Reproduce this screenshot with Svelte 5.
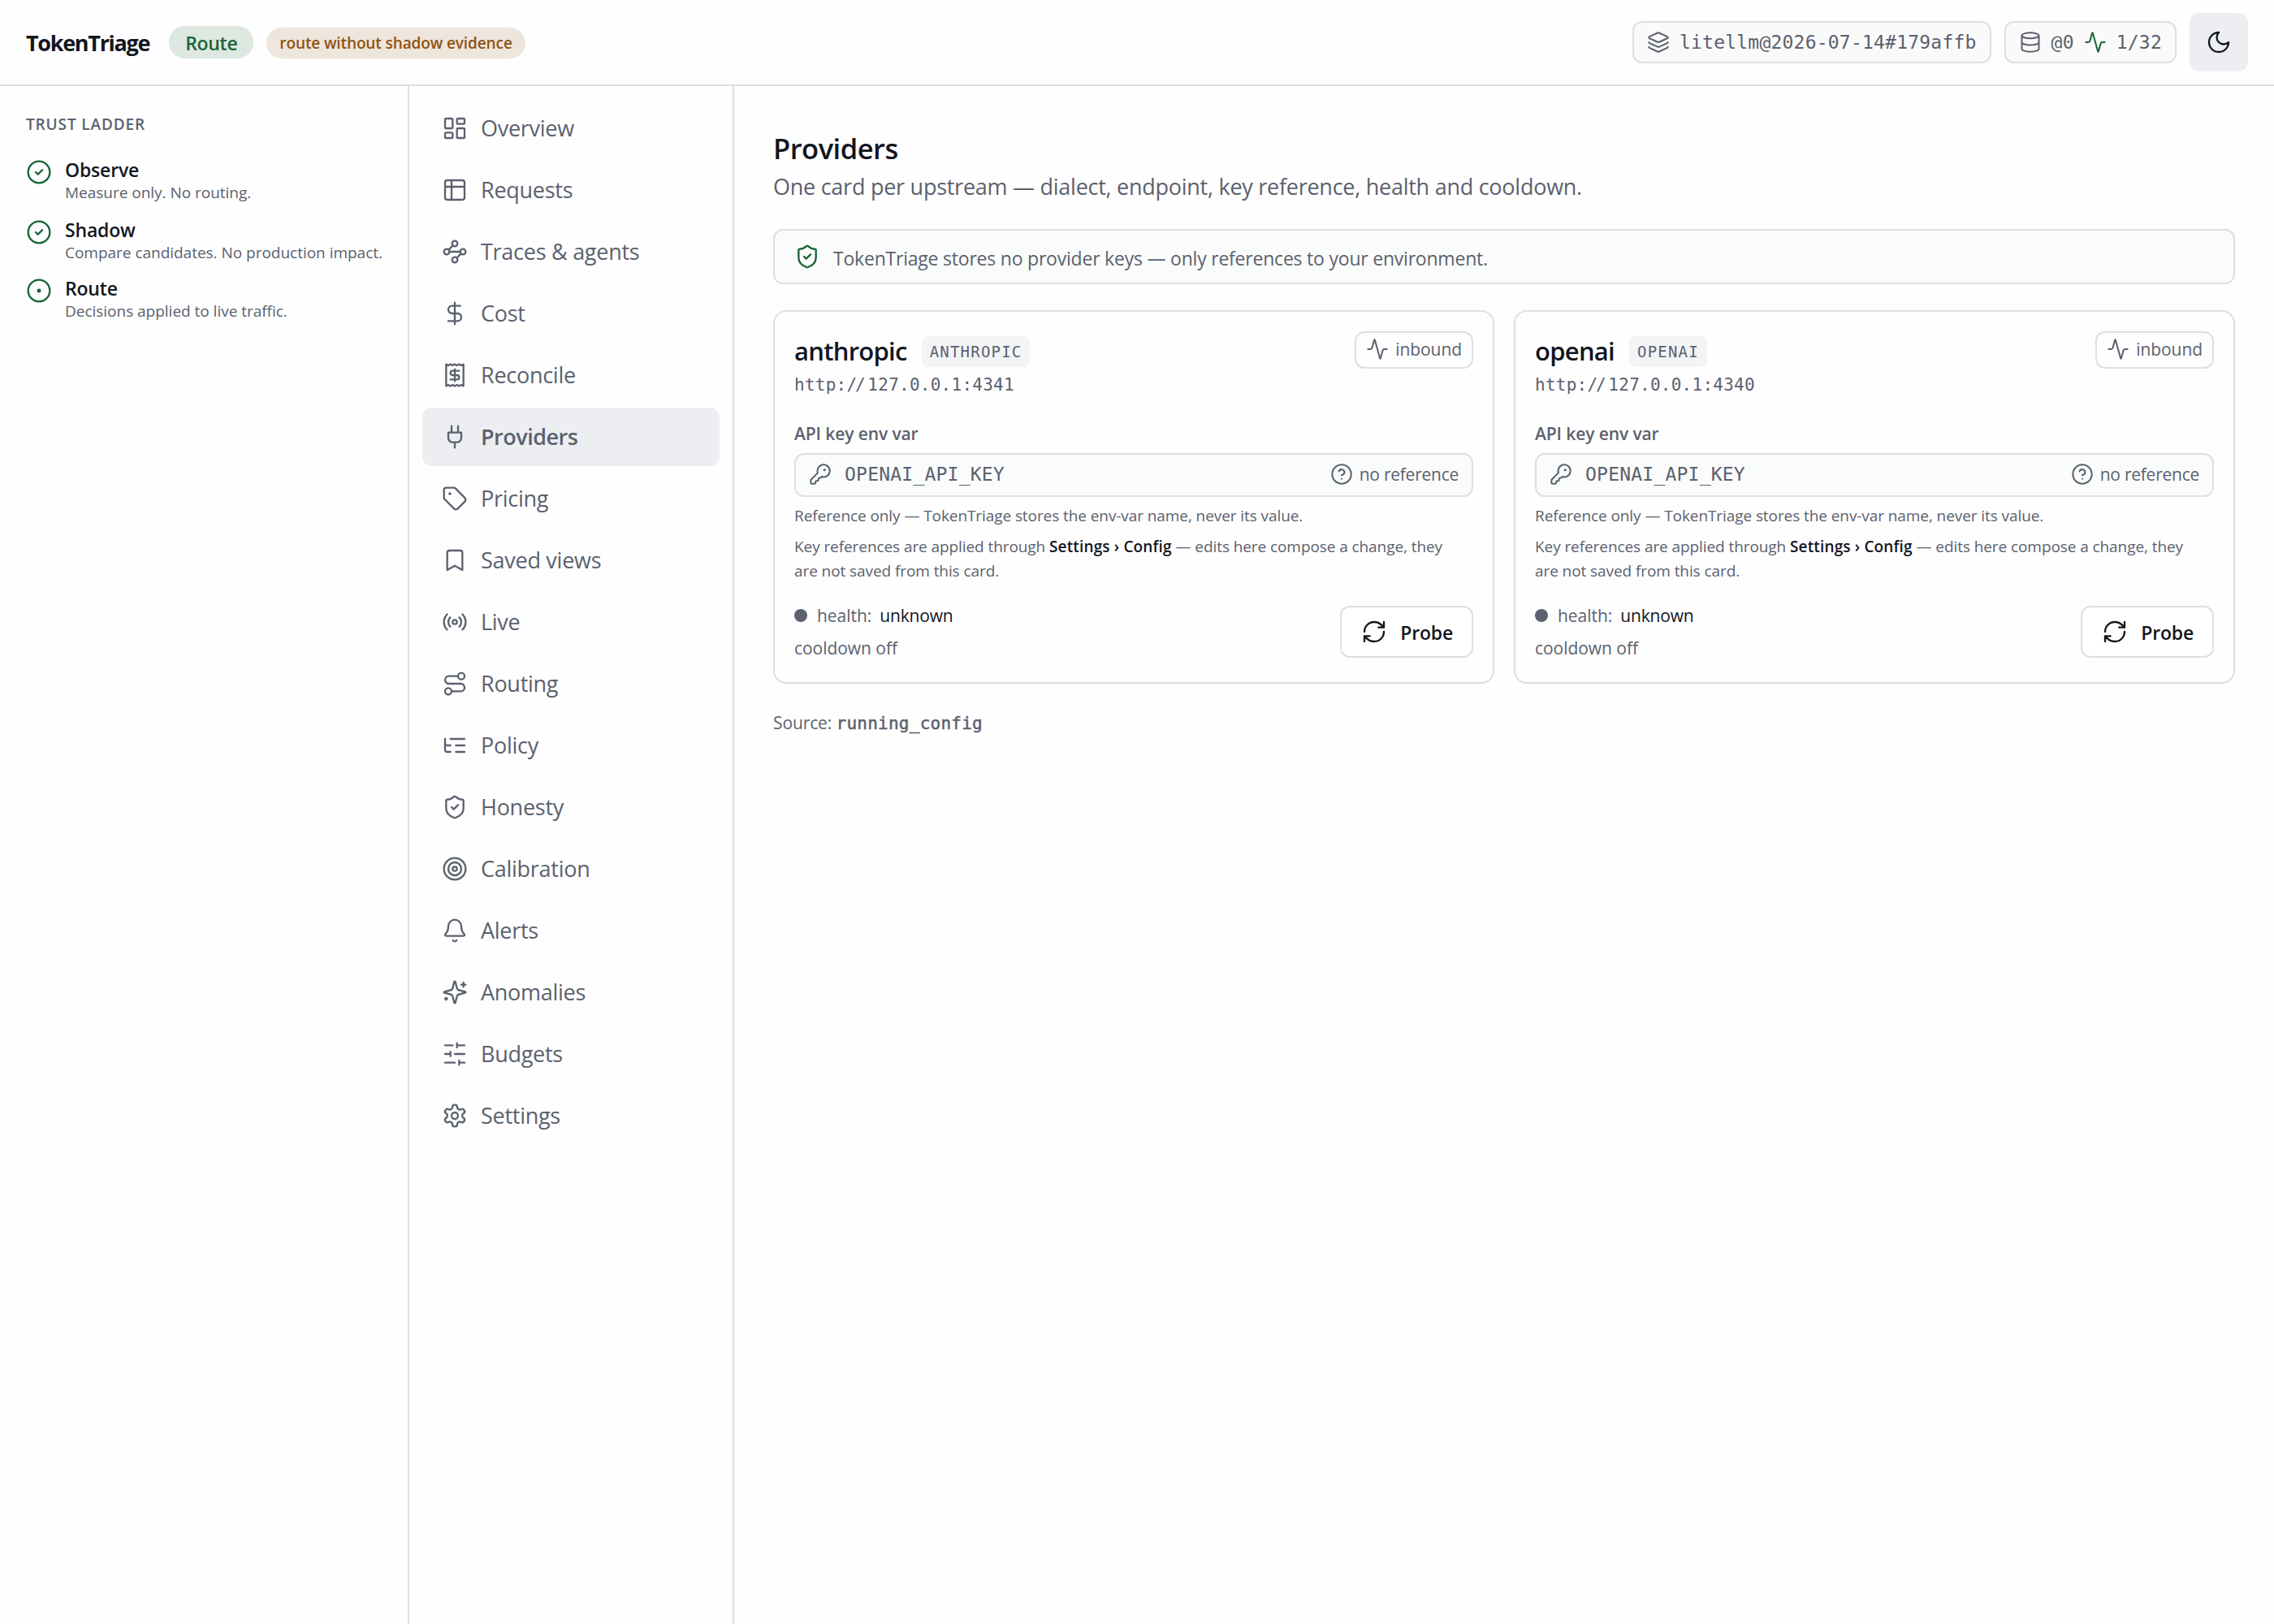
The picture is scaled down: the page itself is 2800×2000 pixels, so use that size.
<script>
    const steps = [
        { name: "Observe", note: "Measure only. No routing.", icon: "check" },
        { name: "Shadow", note: "Compare candidates. No production impact.", icon: "check" },
        { name: "Route", note: "Decisions applied to live traffic.", icon: "dot" }
    ]

    const nav = [
        { label: "Overview", icon: "dashboard" },
        { label: "Requests", icon: "table" },
        { label: "Traces & agents", icon: "waypoints" },
        { label: "Cost", icon: "dollar" },
        { label: "Reconcile", icon: "receipt" },
        { label: "Providers", icon: "plug" },
        { label: "Pricing", icon: "tag" },
        { label: "Saved views", icon: "bookmark" },
        { label: "Live", icon: "radio" },
        { label: "Routing", icon: "route" },
        { label: "Policy", icon: "tree" },
        { label: "Honesty", icon: "shield" },
        { label: "Calibration", icon: "target" },
        { label: "Alerts", icon: "bell" },
        { label: "Anomalies", icon: "sparkles" },
        { label: "Budgets", icon: "sliders" },
        { label: "Settings", icon: "gear" }
    ]

    const providers = [
        { name: "anthropic", dialect: "ANTHROPIC", host: "127.0.0.1:4341", key: "OPENAI_API_KEY" },
        { name: "openai", dialect: "OPENAI", host: "127.0.0.1:4340", key: "OPENAI_API_KEY" }
    ]

    // 24x24 stroke icons, circles are written as arcs
    const ring = (cx, cy, r) => `M${cx - r} ${cy}a${r} ${r} 0 1 0 ${2 * r} 0a${r} ${r} 0 1 0 ${-2 * r} 0`
    const box = (x, y, w, h, r) =>
        `M${x + r} ${y}h${w - 2 * r}a${r} ${r} 0 0 1 ${r} ${r}v${h - 2 * r}a${r} ${r} 0 0 1 ${-r} ${r}h${2 * r - w}a${r} ${r} 0 0 1 ${-r} ${-r}v${2 * r - h}a${r} ${r} 0 0 1 ${r} ${-r}z`

    const icons = {
        check: ring(12, 12, 10) + "M9 12l2 2 4-4",
        dot: ring(12, 12, 10) + ring(12, 12, 1),
        dashboard: box(3, 3, 7, 9, 1) + box(14, 3, 7, 5, 1) + box(14, 12, 7, 9, 1) + box(3, 16, 7, 5, 1),
        table: box(3, 3, 18, 18, 2) + "M3 9h18M9 3v18",
        waypoints: ring(12, 4.5, 2.5) + ring(4.5, 12, 2.5) + ring(19.5, 12, 2.5) + ring(12, 19.5, 2.5) + "M10.2 6.3l-3.9 3.9M7 12h10M13.8 17.7l3.9-3.9",
        dollar: "M12 2v20M17 5H9.5a3.5 3.5 0 0 0 0 7h5a3.5 3.5 0 0 1 0 7H6",
        receipt: "M4 2v20l2-1 2 1 2-1 2 1 2-1 2 1 2-1 2 1V2l-2 1-2-1-2 1-2-1-2 1-2-1-2 1ZM16 8h-6a2 2 0 1 0 0 4h4a2 2 0 1 1 0 4H8M12 17.5v-11",
        plug: "M12 22v-5M9 8V2M15 8V2M18 8v5a4 4 0 0 1-4 4h-4a4 4 0 0 1-4-4V8Z",
        tag: "M12.586 2.586A2 2 0 0 0 11.172 2H4a2 2 0 0 0-2 2v7.172a2 2 0 0 0 .586 1.414l8.704 8.704a2.426 2.426 0 0 0 3.42 0l6.58-6.58a2.426 2.426 0 0 0 0-3.42z" + ring(7.5, 7.5, 0.5),
        bookmark: "M19 21l-7-4-7 4V5a2 2 0 0 1 2-2h10a2 2 0 0 1 2 2v16z",
        radio: "M4.9 19.1C1 15.2 1 8.8 4.9 4.9M7.8 16.2c-2.3-2.3-2.3-6.1 0-8.5M16.2 7.8c2.3 2.3 2.3 6.1 0 8.5M19.1 4.9C23 8.8 23 15.1 19.1 19" + ring(12, 12, 2),
        route: ring(6, 19, 3) + "M9 19h8.5a3.5 3.5 0 0 0 0-7h-11a3.5 3.5 0 0 1 0-7H15" + ring(18, 5, 3),
        tree: "M21 12h-8M21 6H8M21 18h-8M3 6v4c0 1.1.9 2 2 2h3M3 10v6c0 1.1.9 2 2 2h3",
        shield: "M20 13c0 5-3.5 7.5-7.66 8.95a1 1 0 0 1-.67-.01C7.5 20.5 4 18 4 13V6a1 1 0 0 1 1-1c2 0 4.5-1.2 6.24-2.72a1.17 1.17 0 0 1 1.52 0C14.51 3.81 17 5 19 5a1 1 0 0 1 1 1zM9 12l2 2 4-4",
        target: ring(12, 12, 10) + ring(12, 12, 6) + ring(12, 12, 2),
        bell: "M10.268 21a2 2 0 0 0 3.464 0M3.262 15.326A1 1 0 0 0 4 17h16a1 1 0 0 0 .74-1.673C19.41 13.956 18 12.499 18 8A6 6 0 0 0 6 8c0 4.499-1.411 5.956-2.738 7.326",
        sparkles: "M9.937 15.5A2 2 0 0 0 8.5 14.063l-6.135-1.582a.5.5 0 0 1 0-.962L8.5 9.936A2 2 0 0 0 9.937 8.5l1.582-6.135a.5.5 0 0 1 .963 0L14.063 8.5A2 2 0 0 0 15.5 9.937l6.135 1.581a.5.5 0 0 1 0 .964L15.5 14.063a2 2 0 0 0-1.437 1.437l-1.582 6.135a.5.5 0 0 1-.963 0zM20 3v4M22 5h-4M4 17v2M5 18H3",
        sliders: "M21 4h-7M10 4H3M21 12h-9M8 12H3M21 20h-5M12 20H3M14 2v4M8 10v4M16 18v4",
        gear: "M12.22 2h-.44a2 2 0 0 0-2 2v.18a2 2 0 0 1-1 1.73l-.43.25a2 2 0 0 1-2 0l-.15-.08a2 2 0 0 0-2.73.73l-.22.38a2 2 0 0 0 .73 2.73l.15.1a2 2 0 0 1 1 1.72v.51a2 2 0 0 1-1 1.74l-.15.09a2 2 0 0 0-.73 2.73l.22.38a2 2 0 0 0 2.73.73l.15-.08a2 2 0 0 1 2 0l.43.25a2 2 0 0 1 1 1.73V20a2 2 0 0 0 2 2h.44a2 2 0 0 0 2-2v-.18a2 2 0 0 1 1-1.73l.43-.25a2 2 0 0 1 2 0l.15.08a2 2 0 0 0 2.73-.73l.22-.39a2 2 0 0 0-.73-2.73l-.15-.08a2 2 0 0 1-1-1.74v-.5a2 2 0 0 1 1-1.74l.15-.09a2 2 0 0 0 .73-2.73l-.22-.38a2 2 0 0 0-2.73-.73l-.15.08a2 2 0 0 1-2 0l-.43-.25a2 2 0 0 1-1-1.73V4a2 2 0 0 0-2-2z" + ring(12, 12, 3),
        layers: "M12.83 2.18a2 2 0 0 0-1.66 0L2.6 6.08a1 1 0 0 0 0 1.83l8.58 3.91a2 2 0 0 0 1.66 0l8.58-3.9a1 1 0 0 0 0-1.83zM2 12a1 1 0 0 0 .58.91l8.6 3.91a2 2 0 0 0 1.65 0l8.58-3.9A1 1 0 0 0 22 12M2 17a1 1 0 0 0 .58.91l8.6 3.91a2 2 0 0 0 1.65 0l8.58-3.9A1 1 0 0 0 22 17",
        database: "M3 5a9 3 0 1 0 18 0a9 3 0 1 0-18 0M3 5v14a9 3 0 0 0 18 0V5M3 12a9 3 0 0 0 18 0",
        activity: "M22 12h-2.48a2 2 0 0 0-1.93 1.46l-2.35 8.36a.25.25 0 0 1-.48 0L9.24 2.18a.25.25 0 0 0-.48 0l-2.35 8.36A2 2 0 0 1 4.49 12H2",
        moon: "M12 3a6 6 0 0 0 9 9 9 9 0 1 1-9-9Z",
        key: "M2.586 17.414A2 2 0 0 0 2 18.828V21a1 1 0 0 0 1 1h3a1 1 0 0 0 1-1v-1a1 1 0 0 1 1-1h1a1 1 0 0 0 1-1v-1a1 1 0 0 1 1-1h.172a2 2 0 0 0 1.414-.586l.814-.814a6.5 6.5 0 1 0-4-4z" + ring(16.5, 7.5, 0.5),
        help: ring(12, 12, 10) + "M9.09 9a3 3 0 0 1 5.83 1c0 2-3 3-3 3M12 17h.01",
        refresh: "M3 12a9 9 0 0 1 9-9 9.75 9.75 0 0 1 6.74 2.74L21 8M21 3v5h-5M21 12a9 9 0 0 1-9 9 9.75 9.75 0 0 1-6.74-2.74L3 16M8 16H3v5"
    }

    let active = $state("Providers")
</script>

{#snippet icon(name, size = 32)}
    <svg class="icon" width={size} height={size} viewBox="0 0 24 24" aria-hidden="true">
        <path d={icons[name]} />
    </svg>
{/snippet}

<div class="app">
    <header>
        <span class="brand">TokenTriage</span>
        <span class="pill mode">Route</span>
        <span class="pill warn">route without shadow evidence</span>
        <div class="status">
            <span class="chip mono">{@render icon("layers", 28)}<span>litellm@2026-07-14#179affb</span></span>
            <span class="chip mono">
                {@render icon("database", 28)}
                <span>@0</span>
                <span class="ok">{@render icon("activity", 28)}</span>
                <span>1/32</span>
            </span>
            <button class="theme" aria-label="Toggle theme">{@render icon("moon")}</button>
        </div>
    </header>

    <div class="body">
        <aside>
            <h2>TRUST LADDER</h2>
            <ol>
                {#each steps as step}
                    <li>
                        <span class="ok">{@render icon(step.icon)}</span>
                        <div>
                            <p class="step-name">{step.name}</p>
                            <p class="step-note">{step.note}</p>
                        </div>
                    </li>
                {/each}
            </ol>
        </aside>

        <nav>
            {#each nav as item}
                <button class="nav-item" class:active={active === item.label} onclick={() => (active = item.label)}>
                    {@render icon(item.icon)}
                    <span>{item.label}</span>
                </button>
            {/each}
        </nav>

        <main>
            <h1>Providers</h1>
            <p class="lead">One card per upstream — dialect, endpoint, key reference, health and cooldown.</p>

            <div class="banner">
                <span class="ok">{@render icon("shield")}</span>
                <span class="banner-text">TokenTriage stores no provider keys — only references to your environment.</span>
            </div>

            <div class="cards">
                {#each providers as p}
                    <section class="card">
                        <div class="card-head">
                            <h3>{p.name}</h3>
                            <span class="tag mono">{p.dialect}</span>
                            <span class="inbound">{@render icon("activity", 28)}<span>inbound</span></span>
                        </div>
                        <p class="url mono">http:<span class="slashes">//</span>{p.host}</p>

                        <p class="label">API key env var</p>
                        <div class="field">
                            {@render icon("key", 28)}
                            <span class="key mono">{p.key}</span>
                            <span class="noref">{@render icon("help", 28)}<span>no reference</span></span>
                        </div>
                        <p class="hint">Reference only — TokenTriage stores the env-var name, never its value.</p>
                        <p class="hint narrow">
                            Key references are applied through <strong>Settings › Config</strong> — edits here compose a change, they are not saved from this card.
                        </p>

                        <div class="card-foot">
                            <div class="state">
                                <p class="health"><i></i><span>health:</span><b>unknown</b></p>
                                <p>cooldown off</p>
                            </div>
                            <button class="probe">{@render icon("refresh")}<span>Probe</span></button>
                        </div>
                    </section>
                {/each}
            </div>

            <p class="source">Source: <span class="mono">running_config</span></p>
        </main>
    </div>
</div>

<style>
    :global(body) {
        background: #fefefe;
    }

    .app {
        --ink: #12161f;
        --muted: #5b616e;
        --line: #dcdfe4;
        --green: #1a6437;
        display: flex;
        flex-direction: column;
        height: 2000px;
        font-family: "Open Sans", "Noto Sans", sans-serif;
        color: var(--muted);
    }

    h1, h2, h3, p, ol {
        margin: 0;
        padding: 0;
        list-style: none;
    }

    button {
        font: inherit;
        color: inherit;
        border: 0;
        margin: 0;
    }

    .mono {
        font-family: "DejaVu Sans Mono", monospace;
    }

    .icon {
        display: block;
        flex: none;
        fill: none;
        stroke: currentColor;
        stroke-width: 1.75;
        stroke-linecap: round;
        stroke-linejoin: round;
    }

    .ok {
        color: var(--green);
    }

    header {
        display: flex;
        align-items: center;
        height: 104px;
        padding: 0 32px;
        border-bottom: 2px solid var(--line);
    }

    .brand {
        margin-right: 24px;
        font-size: 27px;
        font-weight: 700;
        letter-spacing: -1.3px;
        color: var(--ink);
    }

    .pill {
        box-sizing: border-box;
        border-radius: 20px;
        font-weight: 600;
        white-space: nowrap;
    }

    .mode {
        height: 40px;
        padding: 1px 20px 0;
        margin-right: 16px;
        line-height: 40px;
        font-size: 23px;
        letter-spacing: -0.3px;
        color: var(--green);
        background: #dde8e1;
    }

    .warn {
        height: 38px;
        padding: 0 16px;
        margin-top: 2px;
        line-height: 38px;
        font-size: 19px;
        letter-spacing: -0.11px;
        color: #8f5314;
        background: #eee5dc;
    }

    .status {
        display: flex;
        align-items: center;
        gap: 16px;
        margin-left: auto;
    }

    .chip {
        display: flex;
        align-items: center;
        gap: 12px;
        box-sizing: border-box;
        height: 52px;
        padding: 0 16px;
        border: 2px solid var(--line);
        border-radius: 12px;
        background: #fafafa;
        font-size: 23px;
        letter-spacing: 0.216px;
    }

    .theme {
        display: grid;
        place-items: center;
        width: 72px;
        height: 72px;
        padding: 0;
        border-radius: 12px;
        color: var(--ink);
        background: #edeef2;
    }

    .body {
        display: flex;
        flex: 1;
    }

    aside {
        box-sizing: border-box;
        width: 504px;
        padding: 32px 0 0 32px;
        border-right: 2px solid var(--line);
    }

    aside h2 {
        line-height: 30px;
        font-size: 19px;
        font-weight: 600;
        letter-spacing: 0.87px;
    }

    aside ol {
        display: flex;
        flex-direction: column;
        gap: 18px;
        margin-top: 27px;
    }

    aside li {
        display: flex;
        gap: 16px;
    }

    aside li .ok {
        margin-top: 1px;
    }

    aside li:last-child {
        margin-top: -2px;
    }

    .step-name {
        line-height: 28px;
        font-size: 23px;
        font-weight: 600;
        letter-spacing: -0.18px;
        color: var(--ink);
    }

    .step-note {
        line-height: 28px;
        font-size: 19px;
        letter-spacing: -0.02px;
    }

    nav {
        box-sizing: border-box;
        display: flex;
        flex-direction: column;
        gap: 4px;
        width: 400px;
        padding: 16px;
        border-right: 2px solid var(--line);
    }

    .nav-item {
        display: flex;
        align-items: center;
        gap: 16px;
        height: 72px;
        padding: 0 24px;
        border-radius: 12px;
        background: none;
        font-size: 27px;
        letter-spacing: -0.27px;
    }

    .nav-item span {
        padding-bottom: 2px;
    }

    .nav-item.active {
        background: #edeef2;
        font-weight: 600;
        letter-spacing: -0.5px;
    }

    main {
        flex: 1;
        padding: 52px 48px 0;
    }

    h1 {
        line-height: 49px;
        font-size: 34.5px;
        font-weight: 600;
        letter-spacing: -0.5px;
        color: var(--ink);
    }

    .lead {
        margin-top: 1px;
        line-height: 43px;
        font-size: 27px;
        letter-spacing: -0.26px;
    }

    .banner {
        display: flex;
        align-items: center;
        gap: 16px;
        box-sizing: border-box;
        height: 68px;
        margin-top: 31px;
        padding: 0 24px;
        border: 2px solid var(--line);
        border-radius: 12px;
        background: #fafcfb;
    }

    .banner-text {
        padding-top: 3px;
        font-size: 23px;
        letter-spacing: -0.215px;
    }

    .cards {
        display: grid;
        grid-template-columns: 1fr 1fr;
        gap: 24px;
        margin-top: 32px;
    }

    .card {
        padding: 24px;
        border: 2px solid var(--line);
        border-radius: 16px;
    }

    .card-head {
        display: flex;
        height: 48px;
    }

    h3 {
        line-height: 48px;
        font-size: 31px;
        font-weight: 600;
        letter-spacing: -0.73px;
        color: var(--ink);
    }

    .tag {
        height: 38px;
        margin: 6px 0 0 18px;
        padding: 0 10px;
        line-height: 38px;
        border-radius: 8px;
        background: #f3f4f6;
        font-size: 19px;
        letter-spacing: 1.2px;
    }

    .inbound {
        display: flex;
        align-items: center;
        gap: 8px;
        box-sizing: border-box;
        height: 46px;
        margin-left: auto;
        padding: 0 12px 2px;
        border: 2px solid var(--line);
        border-radius: 12px;
        font-size: 21px;
        letter-spacing: -0.08px;
    }

    .url {
        margin-top: 2px;
        line-height: 33px;
        font-size: 21px;
        letter-spacing: 0.25px;
    }

    /* the two slashes sit closer together than the grid of the font */
    .slashes {
        margin-right: 5px;
        letter-spacing: -2.2px;
    }

    .label {
        margin-top: 28px;
        line-height: 31px;
        font-size: 21px;
        font-weight: 600;
        letter-spacing: -0.1px;
    }

    .field {
        display: flex;
        align-items: center;
        gap: 16px;
        box-sizing: border-box;
        height: 54px;
        margin-top: 8px;
        padding: 0 16px 2px;
        border: 2px solid var(--line);
        border-radius: 12px;
        background: #fafbfb;
    }

    .key {
        font-size: 23px;
        letter-spacing: 0.216px;
    }

    .noref {
        display: flex;
        align-items: center;
        gap: 8px;
        margin-left: auto;
        font-size: 21px;
        letter-spacing: -0.25px;
    }

    .hint {
        margin-top: 8px;
        line-height: 30px;
        font-size: 19px;
        letter-spacing: -0.08px;
    }

    .hint.narrow {
        padding-right: 16px;
    }

    .hint strong {
        font-weight: 600;
        letter-spacing: 0.145px;
        color: var(--ink);
    }

    .card-foot {
        display: flex;
        justify-content: space-between;
        align-items: center;
        height: 76px;
        margin-top: 22px;
    }

    .state {
        display: flex;
        flex-direction: column;
        gap: 4px;
        line-height: 36px;
        font-size: 21px;
        letter-spacing: -0.04px;
    }

    .health {
        display: flex;
        align-items: center;
        gap: 12px;
    }

    .health i {
        width: 16px;
        height: 16px;
        border-radius: 50%;
        background: var(--muted);
    }

    .health b {
        margin-left: -2px;
        font-weight: 400;
        letter-spacing: -0.18px;
        color: var(--ink);
    }

    .probe {
        display: flex;
        align-items: center;
        gap: 16px;
        box-sizing: border-box;
        height: 64px;
        padding: 0 23px 0 24px;
        border: 2px solid var(--line);
        border-radius: 12px;
        background: #fff;
        font-size: 23px;
        font-weight: 600;
        letter-spacing: -0.2px;
        color: var(--ink);
    }

    .probe span {
        padding-top: 2px;
    }

    .source {
        margin-top: 32px;
        line-height: 32px;
        font-size: 21px;
        letter-spacing: -0.12px;
    }

    .source .mono {
        letter-spacing: 0.25px;
        -webkit-text-stroke: 0.5px currentColor;
    }
</style>
